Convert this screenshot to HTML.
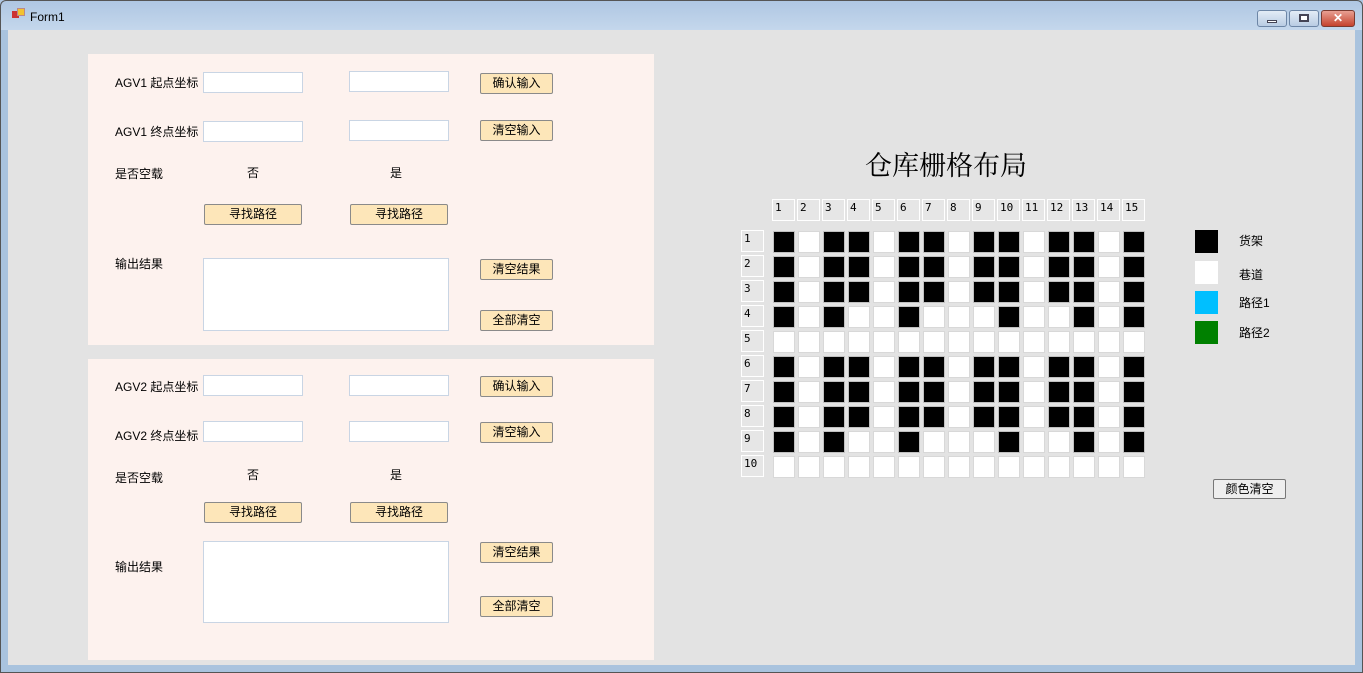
<!DOCTYPE html><html><head><meta charset="utf-8"><style>
*{margin:0;padding:0;box-sizing:border-box}
body{width:1363px;height:673px;overflow:hidden;background:#a9c3de;font-family:"Liberation Sans","Noto Sans CJK SC",sans-serif;font-size:12px;color:#000;position:relative}
.a{position:absolute}
.tb{position:absolute;left:0;top:0;width:1363px;height:30px;background:linear-gradient(#aec6e2,#c4d7ec)}
.client{position:absolute;left:8px;top:30px;width:1347px;height:635px;background:#e3e3e3}
.panel{position:absolute;background:#fdf2ee}
.in{position:absolute;background:#fff;border:1px solid #c9d5e4;height:21px;width:100px}
.btn{position:absolute;width:73px;height:21px;background:#fde6b9;border:1px solid #8a8a8a;border-radius:2px;text-align:center;line-height:19px;font-size:12px}
.btn2{width:98px}
.lb{position:absolute;font-size:12px;font-family:"Liberation Sans","Noto Sans CJK SC",sans-serif}
.c{position:absolute;width:22px;height:22px;background:#fff;border:1px solid #d8d8d8}
.k{background:#000;border-color:#c0c0c0}
.h{position:absolute;width:23px;height:22px;background:#e6e6e6;border:1px solid #fff;font-size:11px;padding-left:2px;line-height:16px;font-family:"DejaVu Sans Mono",monospace}
</style></head><body>
<div class="tb"></div>
<div class="a" style="left:0;top:0;width:1363px;height:673px;border:1px solid #555;border-radius:6px 6px 0 0"></div>
<div class="a" style="left:12px;top:11px;width:7px;height:7px;background:#c33"></div>
<div class="a" style="left:17px;top:8px;width:8px;height:8px;background:#f3c230;border:1px solid #b88"></div>
<div class="a" style="left:30px;top:10px;font-size:12px">Form1</div>
<div class="a" style="left:1257px;top:10px;width:30px;height:17px;border:1px solid #6d86a6;border-radius:3px;background:linear-gradient(#e3ecf6,#b9cce3)"><div class="a" style="left:9px;top:9px;width:10px;height:3px;background:#fff;border:1px solid #445"></div></div>
<div class="a" style="left:1289px;top:10px;width:30px;height:17px;border:1px solid #6d86a6;border-radius:3px;background:linear-gradient(#e3ecf6,#b9cce3)"><div class="a" style="left:9px;top:3px;width:10px;height:8px;background:#fff;border:2px solid #445"></div></div>
<div class="a" style="left:1321px;top:10px;width:34px;height:17px;border:1px solid #7a3a30;border-radius:3px;background:linear-gradient(#e8a093,#c5432e);color:#fff;text-align:center;font-weight:bold;line-height:15px">✕</div>
<div class="client"></div>

<div class="panel" style="left:88px;top:54px;width:566px;height:291px"></div>
<div class="panel" style="left:88px;top:359px;width:566px;height:301px"></div>

<div class="lb" style="left:115px;top:74px">AGV1 起点坐标</div>
<div class="in" style="left:203px;top:72px"></div><div class="in" style="left:349px;top:71px"></div>
<div class="btn" style="left:480px;top:73px">确认输入</div>
<div class="lb" style="left:115px;top:123px">AGV1 终点坐标</div>
<div class="in" style="left:203px;top:121px"></div><div class="in" style="left:349px;top:120px"></div>
<div class="btn" style="left:480px;top:120px">清空输入</div>
<div class="lb" style="left:115px;top:165px">是否空载</div>
<div class="lb" style="left:247px;top:164px">否</div><div class="lb" style="left:390px;top:164px">是</div>
<div class="btn btn2" style="left:204px;top:204px">寻找路径</div><div class="btn btn2" style="left:350px;top:204px">寻找路径</div>
<div class="lb" style="left:115px;top:255px">输出结果</div>
<div class="in" style="left:203px;top:258px;width:246px;height:73px"></div>
<div class="btn" style="left:480px;top:259px">清空结果</div>
<div class="btn" style="left:480px;top:310px">全部清空</div>

<div class="lb" style="left:115px;top:378px">AGV2 起点坐标</div>
<div class="in" style="left:203px;top:375px"></div><div class="in" style="left:349px;top:375px"></div>
<div class="btn" style="left:480px;top:376px">确认输入</div>
<div class="lb" style="left:115px;top:427px">AGV2 终点坐标</div>
<div class="in" style="left:203px;top:421px"></div><div class="in" style="left:349px;top:421px"></div>
<div class="btn" style="left:480px;top:422px">清空输入</div>
<div class="lb" style="left:115px;top:469px">是否空载</div>
<div class="lb" style="left:247px;top:466px">否</div><div class="lb" style="left:390px;top:466px">是</div>
<div class="btn btn2" style="left:204px;top:502px">寻找路径</div><div class="btn btn2" style="left:350px;top:502px">寻找路径</div>
<div class="lb" style="left:115px;top:558px">输出结果</div>
<div class="in" style="left:203px;top:541px;width:246px;height:82px"></div>
<div class="btn" style="left:480px;top:542px">清空结果</div>
<div class="btn" style="left:480px;top:596px">全部清空</div>

<div class="a" style="left:865px;top:147px;font-size:27px;font-family:'Noto Serif CJK SC',serif;line-height:34px">仓库栅格布局</div>
<div id="g"></div>

<div class="a" style="left:1195px;top:230px;width:23px;height:23px;background:#000"></div>
<div class="a" style="left:1195px;top:261px;width:23px;height:23px;background:#fff"></div>
<div class="a" style="left:1195px;top:291px;width:23px;height:23px;background:#00bfff"></div>
<div class="a" style="left:1195px;top:321px;width:23px;height:23px;background:#008000"></div>
<div class="lb" style="left:1239px;top:232px">货架</div>
<div class="lb" style="left:1239px;top:266px">巷道</div>
<div class="lb" style="left:1239px;top:294px">路径1</div>
<div class="lb" style="left:1239px;top:324px">路径2</div>
<div class="a" style="left:1213px;top:479px;width:73px;height:20px;background:#eee;border:1px solid #777;border-radius:2px;text-align:center;line-height:18px">颜色清空</div>
<script>
var g=document.getElementById('g'),h='';
var full=[1,0,1,1,0,1,1,0,1,1,0,1,1,0,1],half=[1,0,1,0,0,1,0,0,0,1,0,0,1,0,1],none=[0,0,0,0,0,0,0,0,0,0,0,0,0,0,0];
var rows=[full,full,full,half,none,full,full,full,half,none];
for(var j=0;j<15;j++)h+='<div class="h" style="left:'+(772+25*j)+'px;top:199px">'+(j+1)+'</div>';
for(var i=0;i<10;i++){h+='<div class="h" style="left:741px;top:'+(230+25*i)+'px">'+(i+1)+'</div>';
for(var j=0;j<15;j++)h+='<div class="c'+(rows[i][j]?' k':'')+'" style="left:'+(773+25*j)+'px;top:'+(231+25*i)+'px"></div>';}
g.innerHTML=h;
</script>
</body></html>
